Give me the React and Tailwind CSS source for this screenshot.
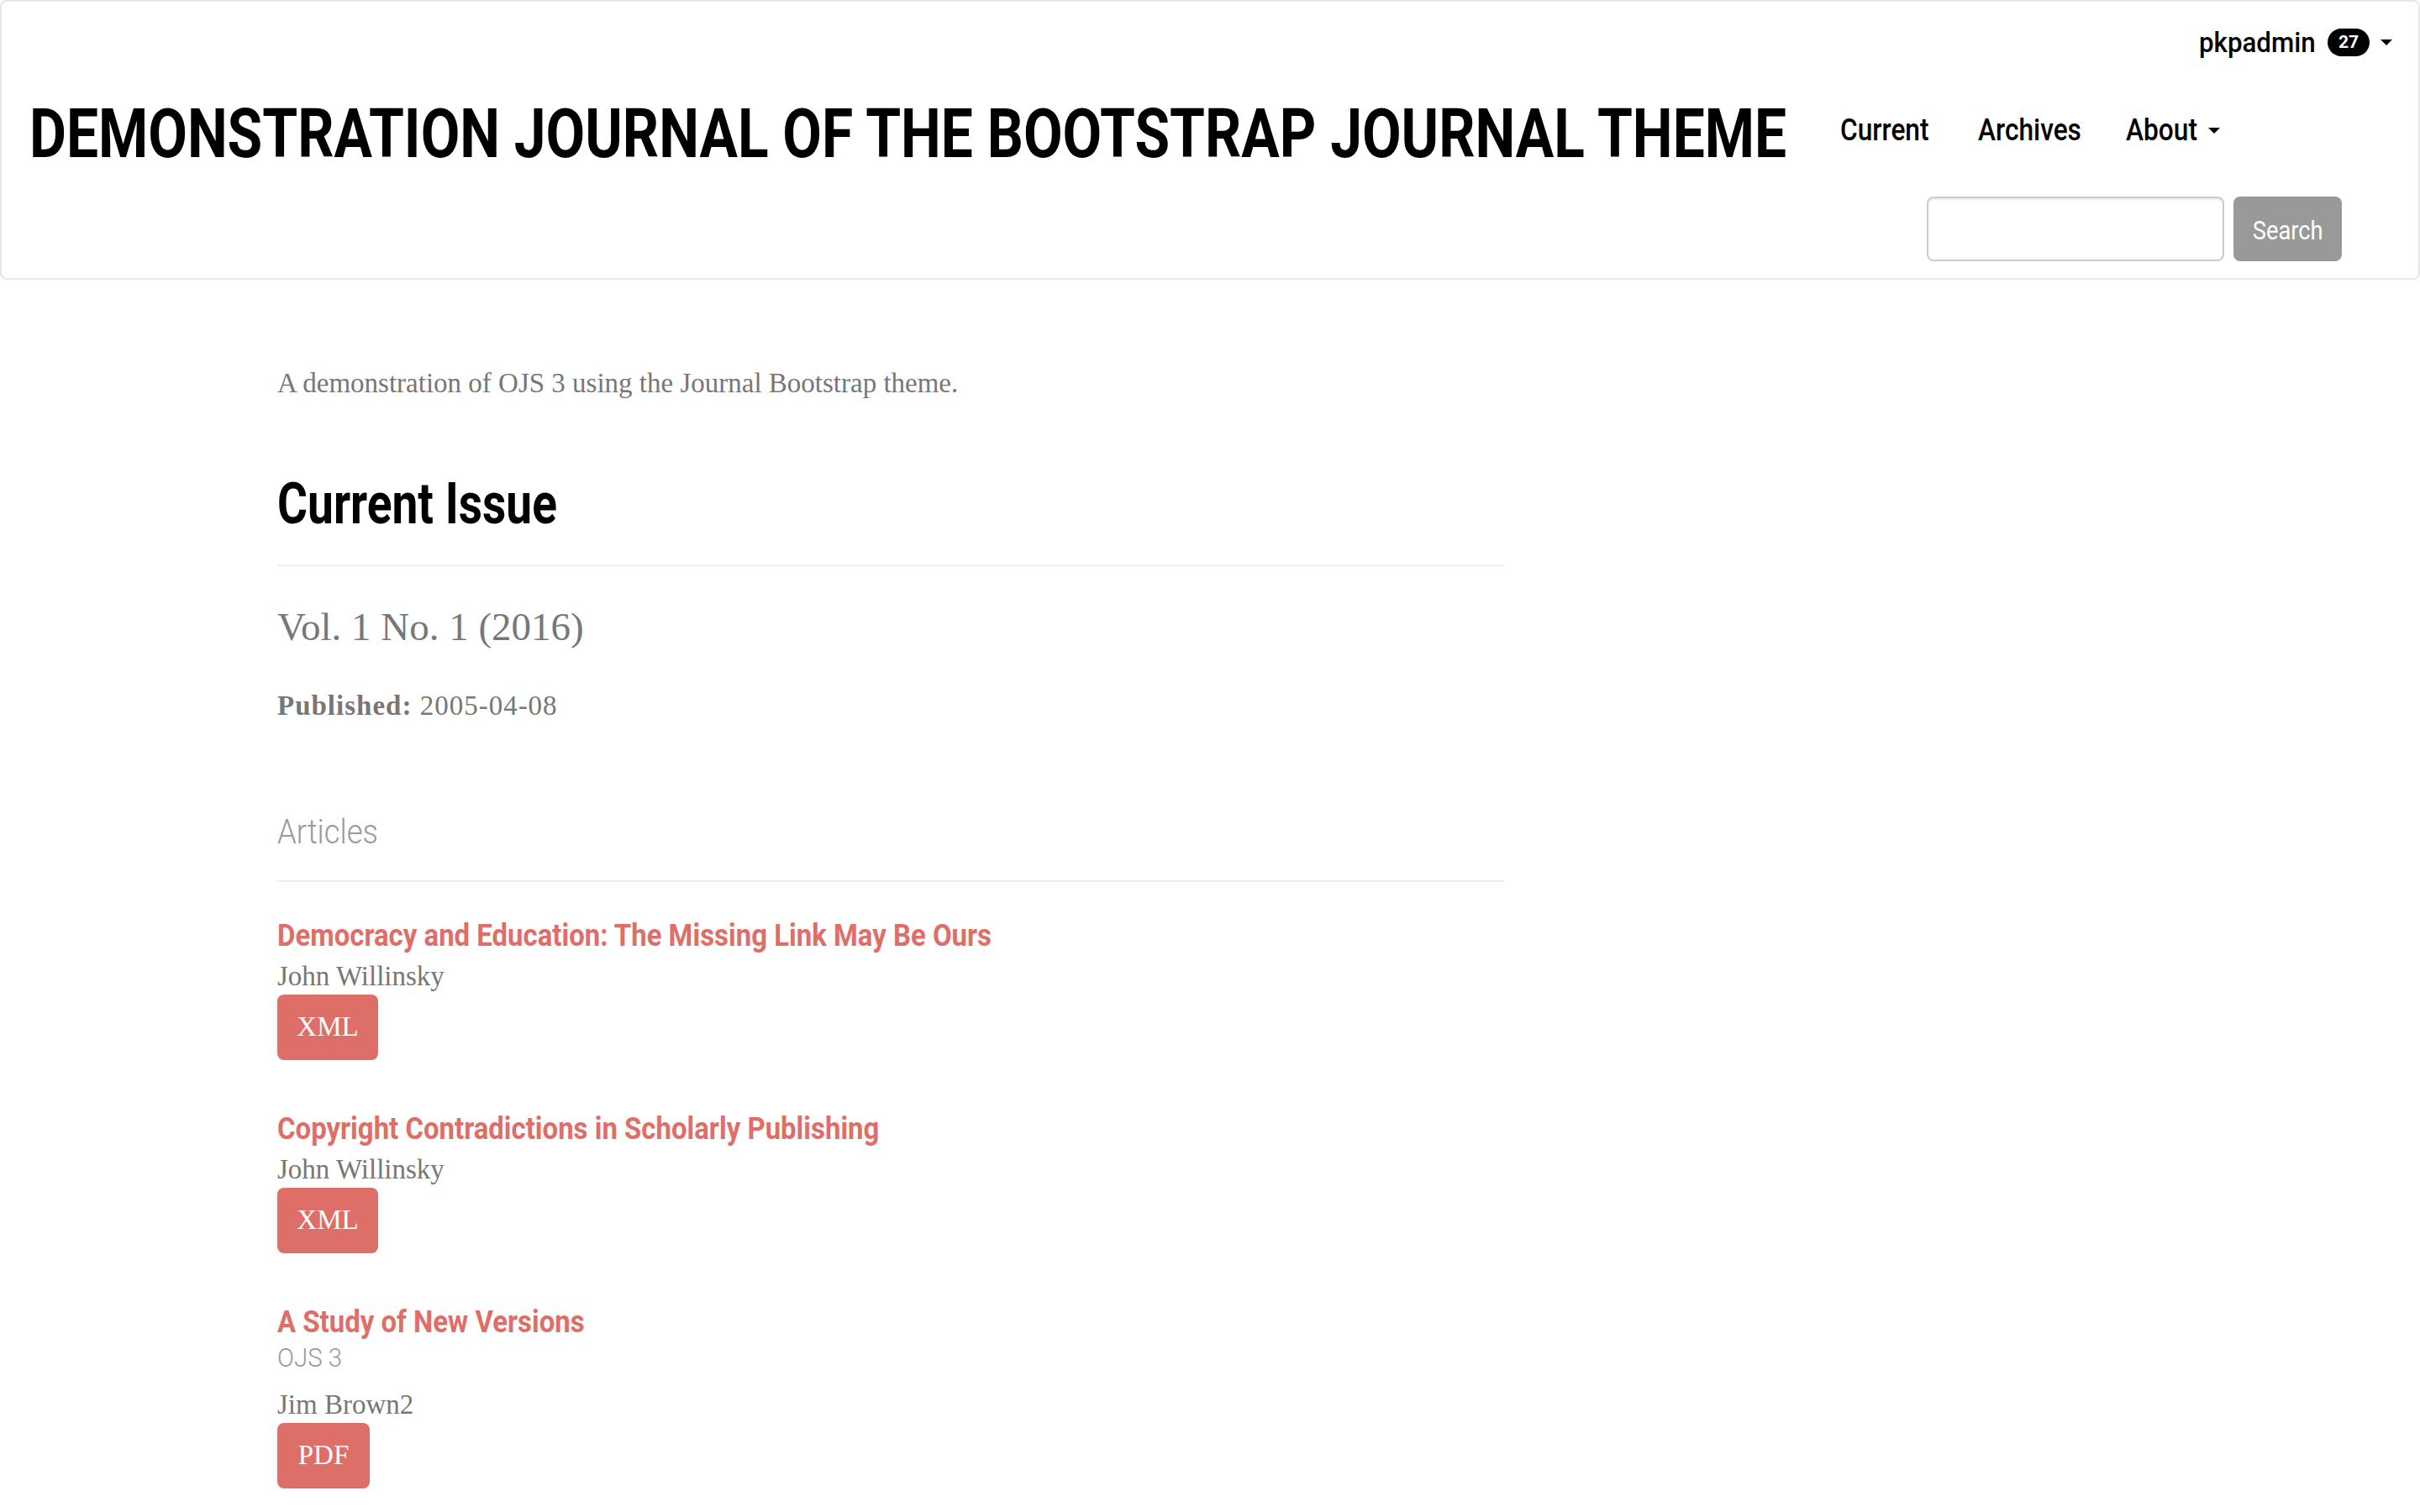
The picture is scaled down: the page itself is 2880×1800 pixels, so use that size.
import React from "react";

const SANS = "font-['Roboto','Liberation_Sans',sans-serif]";
const SERIF = "font-['Liberation_Serif','DejaVu_Serif',serif]";

function Caret({ className = "" }) {
  return (
    <span
      className={`inline-block w-0 h-0 border-l-[7px] border-r-[7px] border-t-[7px] border-l-transparent border-r-transparent border-t-black ${className}`}
    />
  );
}

// Renders a run of text horizontally compressed to imitate a condensed face.
function Cond({ cls, children }) {
  return <span className={`inline-block whitespace-nowrap ${cls}`}>{children}</span>;
}

function Article({ title, subtitle, author, galley, galleyWidth, first }) {
  return (
    <div className={first ? "mt-[42px]" : "mt-[60px]"}>
      <a className={`${SANS} block text-[37px] leading-[44px] font-bold text-[#dd6e68]`} href="#">
        <Cond cls="origin-left scale-x-[0.89]">{title}</Cond>
      </a>
      {subtitle && (
        <div className={`${SANS} mt-[2px] text-[32px] leading-[36px] font-light text-[#999999]`}>
          <Cond cls="origin-left scale-x-[0.92]">{subtitle}</Cond>
        </div>
      )}
      <div className={`${SERIF} ${subtitle ? "mt-[18px]" : "mt-[6px]"} text-[33px] leading-[40px] text-[#777777]`}>
        {author}
      </div>
      <a
        href="#"
        className={`${SERIF} mt-[2px] flex items-center justify-center h-[78px] ${galleyWidth} rounded-[8px] bg-[#dd6e68] text-white text-[33px]`}
      >
        {galley}
      </a>
    </div>
  );
}

export default function App() {
  return (
    <div className="min-h-screen bg-white">
      <header className="h-[333px] border-2 border-[#e7e7e7] rounded-[8px] bg-white">
        <div className={`${SANS} flex justify-end items-center pt-[28px] pr-[31px] h-[68px]`}>
          <span className="w-[136px] text-[34px] leading-[40px] font-medium text-black">
            <Cond cls="origin-left scale-x-[0.92]">pkpadmin</Cond>
          </span>
          <span className="ml-[17px] flex items-center justify-center w-[50px] h-[33px] rounded-full bg-black text-white text-[21px] font-bold leading-none">
            27
          </span>
          <Caret className="ml-[13px]" />
        </div>
        <div className={`${SANS} flex items-start mt-[44px] h-[90px]`}>
          <h1 className="w-[2125px] shrink-0 pl-[33px] text-[82px] leading-[90px] font-bold text-black">
            <Cond cls="origin-left scale-x-[0.825]">DEMONSTRATION JOURNAL OF THE BOOTSTRAP JOURNAL THEME</Cond>
          </h1>
          <nav className="ml-[63px] mt-[21px] flex items-center gap-[57px] text-[36px] leading-[40px] font-medium text-black">
            <a href="#" className="w-[107px]">
              <Cond cls="origin-left scale-x-[0.88]">Current</Cond>
            </a>
            <a href="#" className="w-[119px]">
              <Cond cls="origin-left scale-x-[0.88]">Archives</Cond>
            </a>
            <a href="#" className="flex items-center">
              <span className="w-[85px]">
                <Cond cls="origin-left scale-x-[0.88]">About</Cond>
              </span>
              <Caret className="ml-[13px]" />
            </a>
          </nav>
        </div>
        <div className="flex justify-end pr-[91px] mt-[30px]">
          <input
            type="text"
            className="w-[354px] h-[77px] border-2 border-[#cccccc] rounded-[8px] bg-white shadow-[inset_0_2px_2px_rgba(0,0,0,0.075)] outline-none"
          />
          <button
            className={`${SANS} ml-[11px] w-[129px] h-[77px] pt-[5px] flex items-center justify-center rounded-[8px] bg-[#999999] text-white text-[31px]`}
          >
            <Cond cls="origin-center scale-x-[0.88]">Search</Cond>
          </button>
        </div>
      </header>

      <main className="pl-[330px] w-[1790px] pt-[100px] pb-[40px]">
        <p className={`${SERIF} text-[33px] leading-[47px] text-[#777777]`}>
          A demonstration of OJS 3 using the Journal Bootstrap theme.
        </p>
        <h2 className={`${SANS} mt-[83px] text-[68px] leading-[75px] font-bold text-black`}>
          <Cond cls="origin-left scale-x-[0.81]">Current Issue</Cond>
        </h2>
        <div className="mt-[34px] h-[2px] bg-[#eeeeee]" />
        <div className={`${SERIF} mt-[46px] text-[47px] leading-[52px] text-[#777777]`}>Vol. 1 No. 1 (2016)</div>
        <div className={`${SERIF} mt-[45px] text-[33px] leading-[47px] tracking-[1px] text-[#777777]`}>
          <span className="font-bold">Published:</span> 2005-04-08
        </div>
        <h3 className={`${SANS} mt-[105px] text-[40px] leading-[44px] font-light text-[#999999]`}>
          <Cond cls="origin-left scale-x-[0.91]">Articles</Cond>
        </h3>
        <div className="mt-[35px] h-[2px] bg-[#eeeeee]" />
        <Article
          first
          title="Democracy and Education: The Missing Link May Be Ours"
          author="John Willinsky"
          galley="XML"
          galleyWidth="w-[120px]"
        />
        <Article
          title="Copyright Contradictions in Scholarly Publishing"
          author="John Willinsky"
          galley="XML"
          galleyWidth="w-[120px]"
        />
        <Article
          title="A Study of New Versions"
          subtitle="OJS 3"
          author="Jim Brown2"
          galley="PDF"
          galleyWidth="w-[110px]"
        />
      </main>
    </div>
  );
}
